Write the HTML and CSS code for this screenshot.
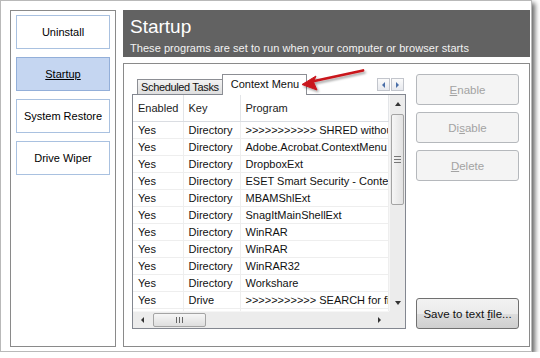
FILE: index.html
```html
<!DOCTYPE html>
<html lang="en">
<head>
  <meta charset="UTF-8" />
  <title>Startup</title>
  <link rel="stylesheet" href="styles.css">
</head>
<body>
  <div class="window">
    <nav class="sidebar">
      <a class="side-btn">Uninstall</a>
      <a class="side-btn active">Startup</a>
      <a class="side-btn">System Restore</a>
      <a class="side-btn">Drive Wiper</a>
    </nav>

    <main class="main">
      <header class="banner">
        <h1>Startup</h1>
        <p>These programs are set to run when your computer or browser starts</p>
      </header>

      <section class="panel">
        <div class="list-area">
          <div class="tabs">
            <div class="tab">Scheduled Tasks</div>
            <div class="tab active">Context Menu</div>
            <div class="tab-scroll">
              <span class="ts-btn"><i class="tri tri-left small"></i></span>
              <span class="ts-btn"><i class="tri tri-right small"></i></span>
            </div>
          </div>

          <div class="listview">
            <div class="grid">
              <table>
                <colgroup>
                  <col class="c-enabled">
                  <col class="c-key">
                  <col class="c-program">
                </colgroup>
                <thead>
                  <tr><th>Enabled</th><th>Key</th><th>Program</th></tr>
                </thead>
                <tbody>
                  <tr><td>Yes</td><td>Directory</td><td>&gt;&gt;&gt;&gt;&gt;&gt;&gt;&gt;&gt;&gt;&gt; SHRED without recycling</td></tr>
                  <tr><td>Yes</td><td>Directory</td><td>Adobe.Acrobat.ContextMenu</td></tr>
                  <tr><td>Yes</td><td>Directory</td><td>DropboxExt</td></tr>
                  <tr><td>Yes</td><td>Directory</td><td>ESET Smart Security - Context Menu</td></tr>
                  <tr><td>Yes</td><td>Directory</td><td>MBAMShlExt</td></tr>
                  <tr><td>Yes</td><td>Directory</td><td>SnagItMainShellExt</td></tr>
                  <tr><td>Yes</td><td>Directory</td><td>WinRAR</td></tr>
                  <tr><td>Yes</td><td>Directory</td><td>WinRAR</td></tr>
                  <tr><td>Yes</td><td>Directory</td><td>WinRAR32</td></tr>
                  <tr><td>Yes</td><td>Directory</td><td>Workshare</td></tr>
                  <tr><td>Yes</td><td>Drive</td><td>&gt;&gt;&gt;&gt;&gt;&gt;&gt;&gt;&gt;&gt;&gt; SEARCH for files</td></tr>
                  <tr><td></td><td></td><td></td></tr>
                </tbody>
              </table>
            </div>

            <div class="vscroll">
              <span class="sb-arrow"><i class="tri tri-up"></i></span>
              <div class="vtrack">
                <div class="vthumb"><i class="grip-h"></i></div>
              </div>
              <span class="sb-arrow"><i class="tri tri-down"></i></span>
            </div>

            <div class="hscroll">
              <span class="sb-arrow"><i class="tri tri-left"></i></span>
              <div class="htrack">
                <div class="hthumb"><i class="grip-v"></i></div>
              </div>
              <span class="sb-arrow"><i class="tri tri-right"></i></span>
            </div>
            <div class="corner"></div>
          </div>
        </div>

        <div class="actions">
          <button class="btn" disabled><u>E</u>nable</button>
          <button class="btn" disabled>Di<u>s</u>able</button>
          <button class="btn" disabled><u>D</u>elete</button>
          <button class="btn save">Save to text <u>f</u>ile...</button>
        </div>
      </section>
    </main>

    <svg class="callout" width="540" height="358" viewBox="0 0 540 358">
      <defs>
        <filter id="shade" x="-20%" y="-50%" width="140%" height="200%">
          <feDropShadow dx="1.5" dy="2" stdDeviation="1.2" flood-color="#000" flood-opacity="0.35"/>
        </filter>
      </defs>
      <g filter="url(#shade)" fill="#c9161c" stroke="#c9161c">
        <line x1="363" y1="70.5" x2="312" y2="81.5" stroke-width="2.8" stroke-linecap="round"/>
        <polygon points="302,84.5 316,76 313.5,82 317,90" stroke-width="1" stroke-linejoin="round"/>
      </g>
    </svg>
  </div>
</body>
</html>
```

FILE: styles.css
```css
* {
  box-sizing: border-box;
  margin: 0;
  padding: 0;
}

body {
  background: #ffffff;
  font-family: 'Liberation Sans', Arial, sans-serif;
  font-size: 11px;
  color: #111;
}

.window {
  position: relative;
  width: 532px;
  height: 352px;
  background: #ffffff;
  border: 1px solid #b9b9b9;
  box-shadow: 3px 3px 5px rgba(0, 0, 0, 0.6);
  padding: 9px 2px 4px 9px;
  display: flex;
  gap: 7px;
}

/* left navigation */

.sidebar {
  flex: 0 0 106px;
  border: 1px solid #8a8a8a;
  padding: 4px 5px;
  display: flex;
  flex-direction: column;
  gap: 8px;
}

.side-btn {
  height: 34px;
  border: 1px solid #a9c1e0;
  background: #ffffff;
  display: flex;
  align-items: center;
  justify-content: center;
  font-size: 11px;
  color: #000;
}

.side-btn.active {
  background: #c5d6f1;
  border-color: #93afd9;
  text-decoration: underline;
}

/* right side */

.main {
  flex: 1;
  min-height: 0;
  display: flex;
  flex-direction: column;
  gap: 6px;
}

.banner {
  flex: 0 0 47px;
  background: #626262;
  color: #ffffff;
  padding: 5px 7px 0;
}

.banner h1 {
  font-size: 19px;
  font-weight: normal;
  line-height: 23px;
}

.banner p {
  margin-top: 2px;
  font-size: 11px;
  line-height: 16px;
  color: #f2f2f2;
  letter-spacing: 0.05px;
}

.panel {
  flex: 1;
  min-height: 0;
  border: 1px solid #8a8a8a;
  padding: 9px 10px 17px 8px;
  display: flex;
  gap: 10px;
}

.list-area {
  flex: 0 0 274px;
  min-height: 0;
  display: flex;
  flex-direction: column;
}

/* tabs */

.tabs {
  flex: 0 0 21px;
  display: flex;
  align-items: flex-end;
  padding-left: 5px;
}

.tab {
  height: 15px;
  padding: 0 3px;
  border: 1px solid #8c8e94;
  border-bottom: none;
  background: linear-gradient(#f3f3f3, #dedede);
  line-height: 14px;
  font-size: 11px;
  letter-spacing: -0.35px;
  white-space: nowrap;
}

.tab.active {
  height: 21px;
  margin-bottom: -1px;
  margin-left: -1px;
  padding: 0 7px 0 8px;
  background: #ffffff;
  position: relative;
  z-index: 1;
  line-height: 18px;
  letter-spacing: 0;
}

.tab-scroll {
  margin-left: auto;
  margin-right: 2px;
  margin-bottom: 3px;
  display: flex;
  gap: 1px;
}

.ts-btn {
  width: 13px;
  height: 13px;
  border: 1px solid #c2c5cc;
  background: linear-gradient(#fbfbfb, #e7e9ee);
  display: flex;
  align-items: center;
  justify-content: center;
}

/* list view */

.listview {
  flex: 1;
  min-height: 0;
  border: 1px solid #838790;
  display: grid;
  grid-template-columns: minmax(0, 1fr) 16px;
  grid-template-rows: minmax(0, 1fr) 17px;
  overflow: hidden;
  background: #ffffff;
}

.grid {
  overflow: hidden;
  min-height: 0;
}

table {
  width: 255px;
  table-layout: fixed;
  border-collapse: collapse;
}

.c-enabled { width: 50px; }
.c-key { width: 57px; }
.c-program { width: 148px; }

th, td {
  white-space: nowrap;
  overflow: hidden;
  text-align: left;
  font-weight: normal;
  padding-left: 5px;
  font-size: 11px;
}

th {
  height: 26px;
  border-right: 1px solid #e3e5e8;
  border-bottom: 1px solid #dadde2;
  color: #1b1b1b;
}

td {
  height: 17px;
  border-right: 1px solid #eeeeee;
  border-bottom: 1px solid #eeeeee;
}

/* scrollbars */

.vscroll {
  background: #ececec;
  display: flex;
  flex-direction: column;
  border-left: 1px solid #f6f6f6;
  min-height: 0;
}

.sb-arrow {
  flex: 0 0 17px;
  display: flex;
  align-items: center;
  justify-content: center;
}

.vtrack {
  flex: 1;
  padding-top: 2px;
}

.vthumb {
  height: 91px;
  margin: 0 1px;
  border: 1px solid #a4a4a4;
  border-radius: 2px;
  background: linear-gradient(to right, #f6f6f6, #e2e2e2);
  display: flex;
  align-items: center;
  justify-content: center;
}

.hscroll {
  background: #ececec;
  display: flex;
  border-top: 1px solid #f6f6f6;
}

.hscroll .sb-arrow {
  flex: 0 0 19px;
}

.htrack {
  flex: 1;
  padding: 1px 0 0 1px;
}

.hthumb {
  width: 53px;
  height: 14px;
  border: 1px solid #a4a4a4;
  border-radius: 2px;
  background: linear-gradient(#f6f6f6, #dedede);
  display: flex;
  align-items: center;
  justify-content: center;
}

.corner {
  background: #ececec;
}

.grip-h {
  width: 7px;
  height: 7px;
  border-top: 1px solid #777;
  border-bottom: 1px solid #777;
  position: relative;
}

.grip-h::after {
  content: "";
  position: absolute;
  left: 0;
  right: 0;
  top: 2px;
  border-top: 1px solid #777;
}

.grip-v {
  width: 7px;
  height: 6px;
  border-left: 1px solid #666;
  border-right: 1px solid #666;
  position: relative;
}

.grip-v::after {
  content: "";
  position: absolute;
  top: 0;
  bottom: 0;
  left: 2px;
  border-left: 1px solid #666;
}

.tri {
  display: block;
  width: 0;
  height: 0;
  border: 3px solid transparent;
}

.tri-up { border-bottom: 4px solid #333; border-top: none; }
.tri-down { border-top: 4px solid #333; border-bottom: none; }
.tri-left { border-right: 3px solid #333; border-left: none; }
.tri-right { border-left: 3px solid #333; border-right: none; }

.tri.small { border-width: 3px; }
.tri-left.small { border-left: none; border-right-color: #4a6fa8; }
.tri-right.small { border-right: none; border-left-color: #4a6fa8; }

/* buttons */

.actions {
  flex: 0 0 103px;
  display: flex;
  flex-direction: column;
  gap: 7px;
  padding-top: 1px;
}

.btn {
  height: 31px;
  flex: 0 0 31px;
  border: 1px solid #b5b8bc;
  border-radius: 3px;
  background: #f4f4f4;
  color: #a3a3a3;
  font-family: inherit;
  font-size: 11.5px;
}

.btn u {
  text-decoration: underline;
}

.btn.save {
  margin-top: auto;
  border-color: #707070;
  background: linear-gradient(#f2f2f2 0%, #ebebeb 50%, #dddddd 51%, #cfcfcf 100%);
  color: #111;
}

/* red callout arrow over the tabs */

.callout {
  position: absolute;
  left: -1px;
  top: -1px;
  z-index: 5;
  pointer-events: none;
}
```
